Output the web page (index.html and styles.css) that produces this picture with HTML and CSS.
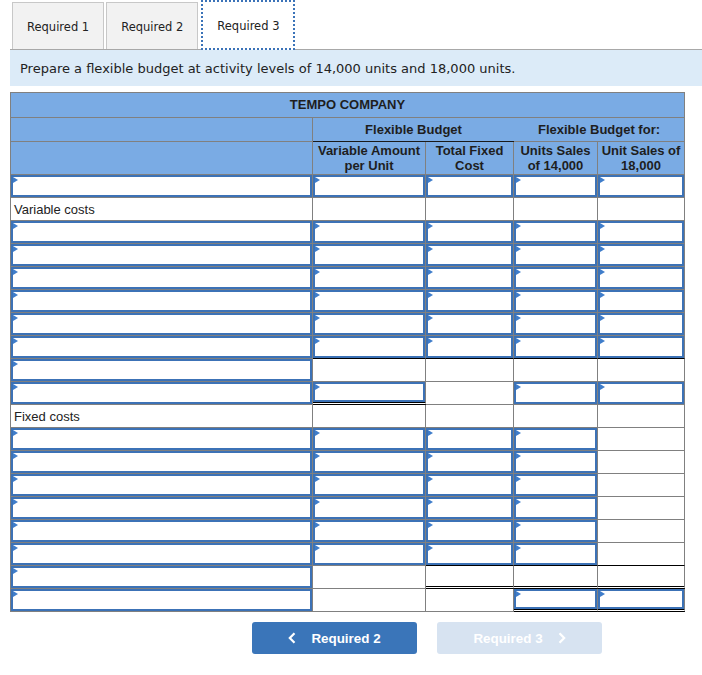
FILE: index.html
```html
<!DOCTYPE html>
<html>
<head>
<meta charset="utf-8">
<link rel="stylesheet" href="styles.css">
</head>
<body>
<div class="page">
  <div class="tabs">
    <div class="tab">Required 1</div>
    <div class="tab">Required 2</div>
    <div class="tab active">Required 3</div>
  </div>
  <div class="instr">Prepare a flexible budget at activity levels of 14,000 units and 18,000 units.</div>
  <table class="budget">
    <colgroup><col class="c1"><col class="c2"><col class="c3"><col class="c4"><col class="c5"></colgroup>
    <thead>
      <tr class="h1"><th colspan="5">TEMPO COMPANY</th></tr>
      <tr class="h2"><th></th><th colspan="2" class="fb">Flexible Budget</th><th colspan="2">Flexible Budget for:</th></tr>
      <tr class="h3"><th></th><th>Variable Amount<br>per Unit</th><th>Total Fixed<br>Cost</th><th>Units Sales<br>of 14,000</th><th>Unit Sales of<br>18,000</th></tr>
    </thead>
    <tbody>
      <tr><td><div class="field"><input type="text"></div></td><td><div class="field"><input type="text"></div></td><td><div class="field"><input type="text"></div></td><td><div class="field"><input type="text"></div></td><td><div class="field"><input type="text"></div></td></tr>
      <tr><td><div class="label">Variable costs</div></td><td><div class="blank"></div></td><td><div class="blank"></div></td><td><div class="blank"></div></td><td><div class="blank"></div></td></tr>
      <tr><td><div class="field"><input type="text"></div></td><td><div class="field"><input type="text"></div></td><td><div class="field"><input type="text"></div></td><td><div class="field"><input type="text"></div></td><td><div class="field"><input type="text"></div></td></tr>
      <tr><td><div class="field"><input type="text"></div></td><td><div class="field"><input type="text"></div></td><td><div class="field"><input type="text"></div></td><td><div class="field"><input type="text"></div></td><td><div class="field"><input type="text"></div></td></tr>
      <tr><td><div class="field"><input type="text"></div></td><td><div class="field"><input type="text"></div></td><td><div class="field"><input type="text"></div></td><td><div class="field"><input type="text"></div></td><td><div class="field"><input type="text"></div></td></tr>
      <tr><td><div class="field"><input type="text"></div></td><td><div class="field"><input type="text"></div></td><td><div class="field"><input type="text"></div></td><td><div class="field"><input type="text"></div></td><td><div class="field"><input type="text"></div></td></tr>
      <tr><td><div class="field"><input type="text"></div></td><td><div class="field"><input type="text"></div></td><td><div class="field"><input type="text"></div></td><td><div class="field"><input type="text"></div></td><td><div class="field"><input type="text"></div></td></tr>
      <tr><td><div class="field"><input type="text"></div></td><td class="blk"><div class="field"><input type="text"></div></td><td class="blk"><div class="field"><input type="text"></div></td><td class="blk"><div class="field"><input type="text"></div></td><td class="blk"><div class="field"><input type="text"></div></td></tr>
      <tr><td><div class="field"><input type="text"></div></td><td><div class="blank"></div></td><td><div class="blank"></div></td><td><div class="blank"></div></td><td><div class="blank"></div></td></tr>
      <tr><td><div class="field"><input type="text"></div></td><td class="dbl"><div class="field"><input type="text"></div></td><td><div class="blank"></div></td><td><div class="field"><input type="text"></div></td><td><div class="field"><input type="text"></div></td></tr>
      <tr><td><div class="label">Fixed costs</div></td><td><div class="blank"></div></td><td><div class="blank"></div></td><td><div class="blank"></div></td><td><div class="blank"></div></td></tr>
      <tr><td><div class="field"><input type="text"></div></td><td><div class="field"><input type="text"></div></td><td><div class="field"><input type="text"></div></td><td><div class="field"><input type="text"></div></td><td><div class="blank"></div></td></tr>
      <tr><td><div class="field"><input type="text"></div></td><td><div class="field"><input type="text"></div></td><td><div class="field"><input type="text"></div></td><td><div class="field"><input type="text"></div></td><td><div class="blank"></div></td></tr>
      <tr><td><div class="field"><input type="text"></div></td><td><div class="field"><input type="text"></div></td><td><div class="field"><input type="text"></div></td><td><div class="field"><input type="text"></div></td><td><div class="blank"></div></td></tr>
      <tr><td><div class="field"><input type="text"></div></td><td><div class="field"><input type="text"></div></td><td><div class="field"><input type="text"></div></td><td><div class="field"><input type="text"></div></td><td><div class="blank"></div></td></tr>
      <tr><td><div class="field"><input type="text"></div></td><td><div class="field"><input type="text"></div></td><td><div class="field"><input type="text"></div></td><td><div class="field"><input type="text"></div></td><td><div class="blank"></div></td></tr>
      <tr><td><div class="field"><input type="text"></div></td><td><div class="field"><input type="text"></div></td><td class="blk"><div class="field"><input type="text"></div></td><td class="blk"><div class="field"><input type="text"></div></td><td class="blk"><div class="blank"></div></td></tr>
      <tr><td><div class="field"><input type="text"></div></td><td><div class="blank"></div></td><td class="dbl"><div class="blank"></div></td><td class="dbl"><div class="blank"></div></td><td class="dbl"><div class="blank"></div></td></tr>
      <tr><td><div class="field"><input type="text"></div></td><td><div class="blank"></div></td><td><div class="blank"></div></td><td class="dbl"><div class="field"><input type="text"></div></td><td class="dbl"><div class="field"><input type="text"></div></td></tr>
    </tbody>
  </table>
  <div class="nav">
    <div class="btn prev"><svg width="8" height="12" viewBox="0 0 8 12"><polyline points="6.5,1.2 1.8,6 6.5,10.8" fill="none" stroke="#fff" stroke-width="2.2"/></svg><span>Required 2</span></div>
    <div class="btn next"><span>Required 3</span><svg width="8" height="12" viewBox="0 0 8 12"><polyline points="1.5,1.2 6.2,6 1.5,10.8" fill="none" stroke="#fff" stroke-width="2.2"/></svg></div>
  </div>
</div>
</body>
</html>
```
FILE: styles.css
```css
html, body {
  margin: 0;
  padding: 0;
  background: #fff;
}

.page {
  padding-left: 10px;
}

.tabs {
  display: flex;
  align-items: flex-end;
  height: 49px;
  padding-left: 2px;
  gap: 2px;
}

.tab {
  box-sizing: border-box;
  height: 47px;
  padding: 0 14px;
  border: 1px solid #c8c8c8;
  border-bottom: none;
  background: #f2f2f2;
  font-family: "DejaVu Sans", Verdana, sans-serif;
  font-size: 11.5px;
  line-height: 48px;
  color: #222;
}

.tab.active {
  height: 50px;
  margin-left: 1px;
  margin-bottom: -1px;
  border: 2px dotted #3b73b8;
  background: #fff;
  line-height: 49px;
}

.instr {
  border-top: 1px solid #a8a8a8;
  background: #dcebf8;
  height: 36px;
  line-height: 38px;
  padding-left: 10px;
  font-family: "DejaVu Sans", Verdana, sans-serif;
  font-size: 13px;
  color: #222;
}

.budget {
  margin-top: 6px;
  border-collapse: separate;
  border-spacing: 0;
  table-layout: fixed;
  width: 675px;
  border-top: 1px solid #808080;
  border-left: 1px solid #808080;
  font-family: "Liberation Sans", Arial, sans-serif;
  font-size: 13px;
  color: #222;
}

.c1 { width: 302px; }
.c2 { width: 113px; }
.c3 { width: 88px; }
.c4 { width: 84px; }
.c5 { width: 87px; }

.budget th,
.budget td {
  box-sizing: border-box;
  padding: 0;
  border-right: 1px solid #808080;
  border-bottom: 1px solid #808080;
}

.budget th {
  background: #7aabe4;
  font-weight: bold;
  text-align: center;
  vertical-align: middle;
  color: #1e1e1e;
}

.h1 th { line-height: 24px; }
.h2 th { line-height: 23px; }
.h3 th { line-height: 15px; padding: 1px 0; }

.h2 .fb {
  border-right: none;
  border-bottom-color: #1a1a1a;
}

.budget td {
  vertical-align: top;
  background: #fff;
}

.field {
  position: relative;
  height: 22px;
}

.field input {
  display: block;
  box-sizing: border-box;
  width: 100%;
  height: 100%;
  margin: 0;
  padding: 0 6px;
  border: 2px solid #3c72b6;
  background: #fff;
  font: inherit;
  outline: none;
}

.field::before {
  content: "";
  position: absolute;
  left: 2px;
  top: 2px;
  width: 0;
  height: 0;
  border-left: 5px solid #3f7dca;
  border-top: 3.5px solid transparent;
  border-bottom: 3.5px solid transparent;
}

.blank { height: 22px; }

.label {
  height: 22px;
  line-height: 23px;
  padding-left: 3px;
  white-space: nowrap;
}

.budget td.blk { border-bottom-color: #000; }

.budget td.dbl { border-bottom: 3px double #000; }
.budget td.dbl > div { height: 20px; }

.nav {
  display: flex;
  gap: 20px;
  margin: 10px 0 0 242px;
}

.btn {
  box-sizing: border-box;
  width: 165px;
  height: 32px;
  display: flex;
  align-items: center;
  justify-content: center;
  gap: 15px;
  border-radius: 3px;
  color: #fff;
  font-family: "Liberation Sans", Arial, sans-serif;
  font-weight: bold;
  font-size: 13.4px;
}

.btn svg { display: block; }

.prev { background: #3a75b9; }
.next { background: #d7e3f1; }
```
